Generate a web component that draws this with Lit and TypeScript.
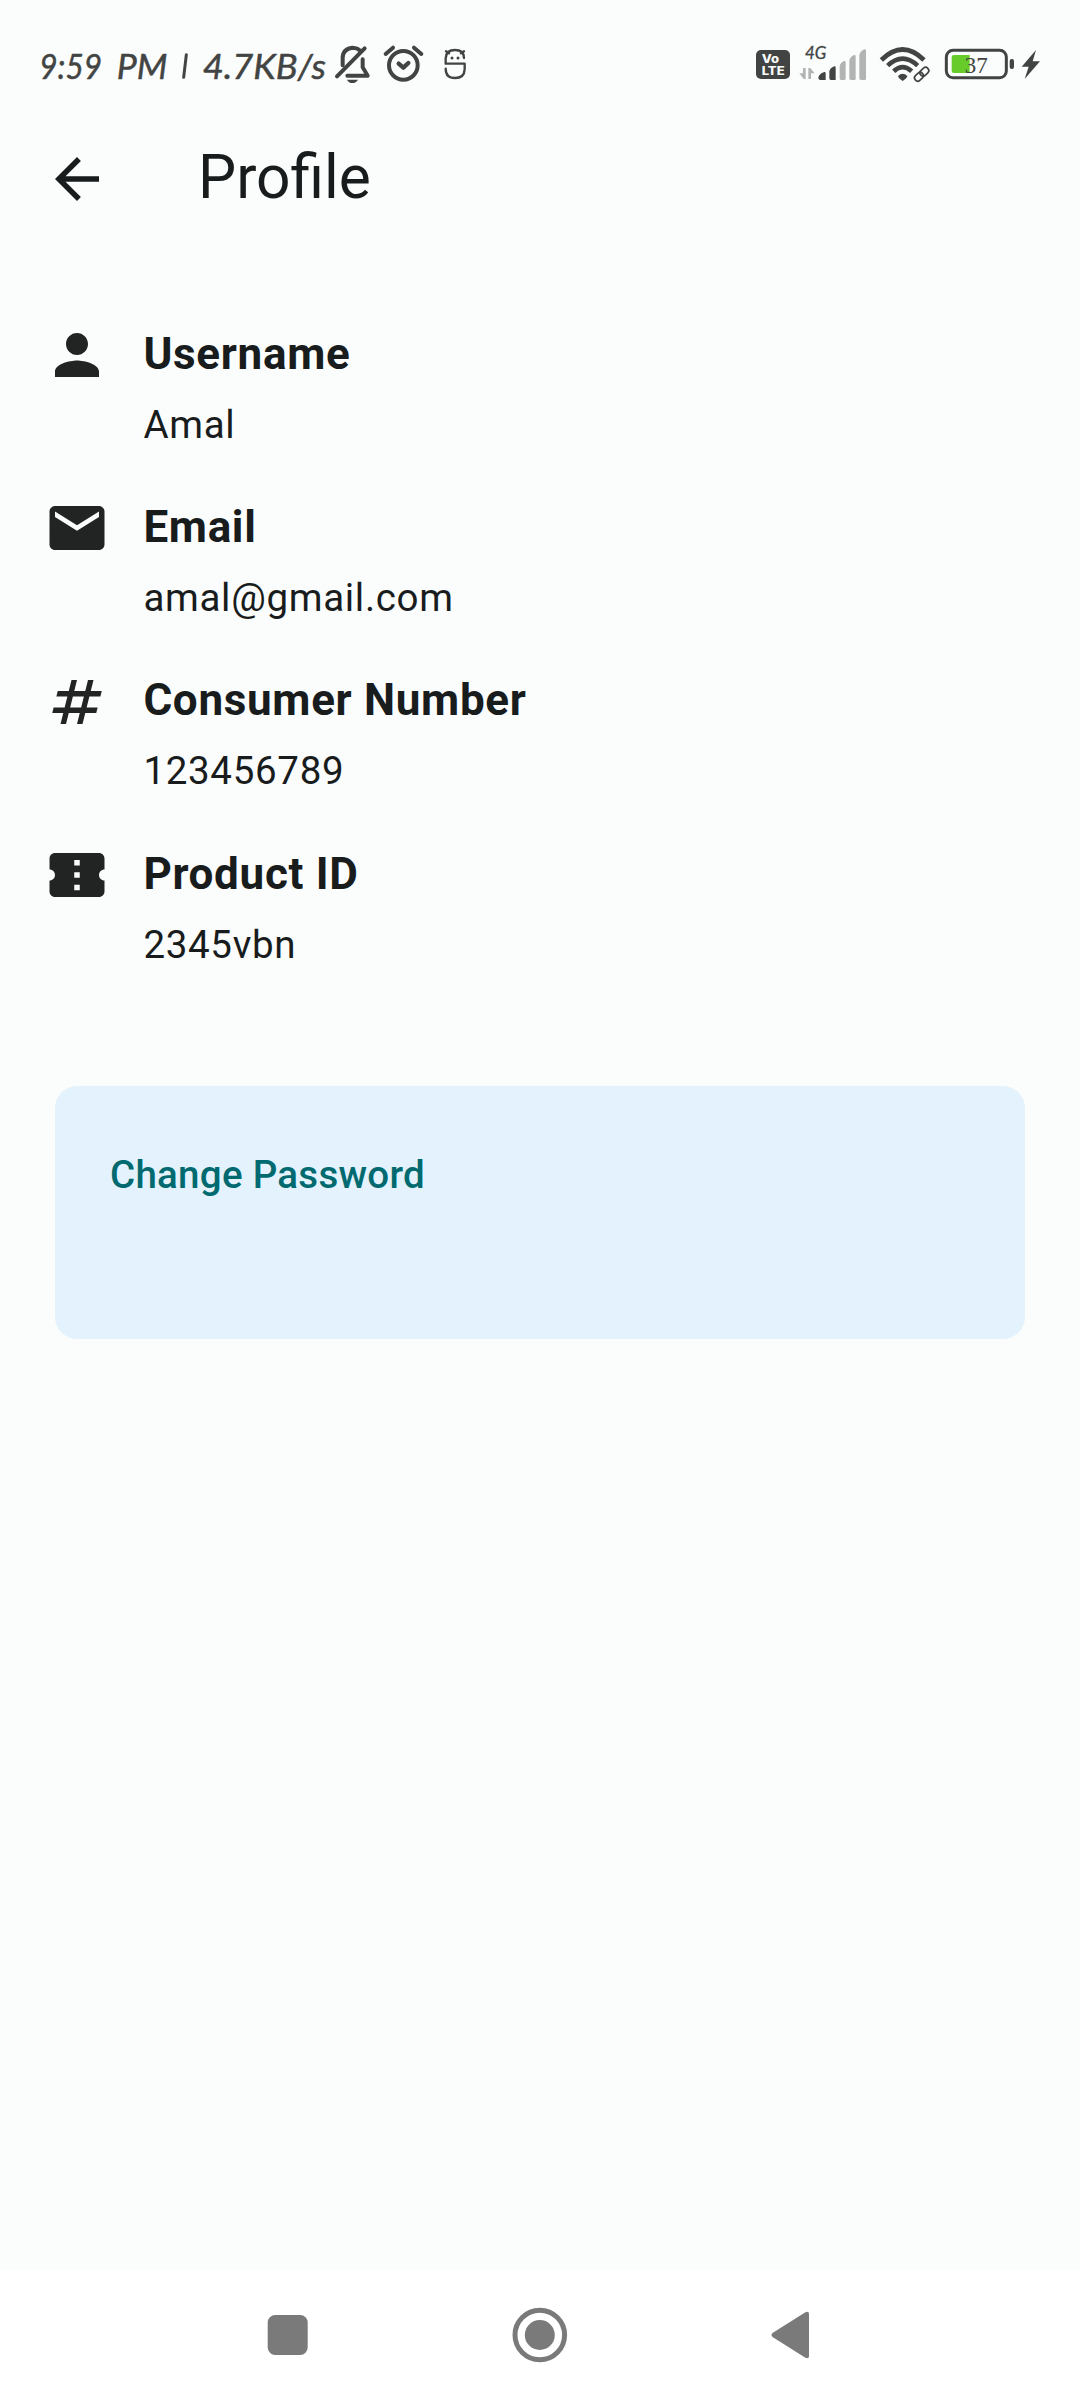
import { LitElement, html, css, svg } from "lit";
import { customElement } from "lit/decorators.js";

const ICONS = {
  back: svg`<path d="M20 11H7.83l5.59-5.59L12 4l-8 8 8 8 1.41-1.41L7.83 13H20v-2z"/>`,
  person: svg`<path d="M12 12c2.21 0 4-1.79 4-4s-1.79-4-4-4-4 1.79-4 4 1.79 4 4 4zm0 2c-2.67 0-8 1.34-8 4v2h16v-2c0-2.66-5.33-4-8-4z"/>`,
  mail: svg`<path d="M20 4H4c-1.1 0-1.99.9-1.99 2L2 18c0 1.1.9 2 2 2h16c1.1 0 2-.9 2-2V6c0-1.1-.9-2-2-2zm0 4l-8 5-8-5V6l8 5 8-5v2z"/>`,
  number: svg`<path d="M20.5 10L21 8h-4l1-4h-2l-1 4h-4l1-4h-2L9 8H5l-.5 2h4l-1 4h-4L3 16h4l-1 4h2l1-4h4l-1 4h2l1-4h4l.5-2h-4l1-4h4zm-7 4h-4l1-4h4l-1 4z"/>`,
  ticket: svg`<path d="M22 10V6c0-1.11-.9-2-2-2H4c-1.1 0-1.99.89-1.99 2v4c1.1 0 1.99.9 1.99 2s-.89 2-2 2v4c0 1.1.9 2 2 2h16c1.1 0 2-.9 2-2v-4c-1.1 0-2-.9-2-2s.9-2 2-2zm-9 7.5h-2v-2h2v2zm0-4.5h-2v-2h2v2zm0-4.5h-2v-2h2v2z"/>`,
};

const FIELDS = [
  { icon: ICONS.person, label: "Username", value: "Amal" },
  { icon: ICONS.mail, label: "Email", value: "amal@gmail.com" },
  { icon: ICONS.number, label: "Consumer Number", value: "123456789" },
  { icon: ICONS.ticket, label: "Product ID", value: "2345vbn" },
];

@customElement("status-bar")
class StatusBar extends LitElement {
  static styles = css`
    :host { display: flex; justify-content: space-between; height: 70px; padding: 30px 20px 0; }
    .group { display: flex; }
    svg { display: block; height: 70px; fill: #424443; }
    .line { fill: none; stroke: #424443; stroke-linecap: round; stroke-linejoin: round; }
    .pale { fill: #b2b4b3; }
    .clock { font: italic 400 105px "Lato", sans-serif; stroke: #424443; stroke-width: 1.5px; stroke-linejoin: round; }
    .net { font: italic 400 54px "Lato", sans-serif; stroke: #424443; stroke-width: 1px; }
    .badge { font: 800 34px "Inter", sans-serif; fill: #fbfdfc; }
    .level { font: 400 70px "Liberation Serif", serif; }
    .green { fill: #67cb2a; }
    .gap { stroke: #fbfdfc; fill: none; }
  `;
  render() {
    return html`
      <div class="group">
        <svg width="310" viewBox="0 0 930 210">
          <g class="clock">
            <text x="58" y="146" textLength="188" lengthAdjust="spacingAndGlyphs">9:59</text>
            <text x="290" y="146" textLength="152" lengthAdjust="spacingAndGlyphs">PM</text>
            <text x="548" y="146" textLength="370" lengthAdjust="spacingAndGlyphs">4.7KB/s</text>
          </g>
          <path class="line" stroke-width="9" d="M499 74L491 142"/>
        </svg>
        <svg width="160" viewBox="30 0 480 210">
          <g class="line" stroke-width="12">
            <path d="M68 106V84Q68 57 97 53Q115 54 122 64"/>
            <path d="M128 88V112L143 137H82"/>
            <path d="M51 139L134 55" stroke-width="12"/>
            <circle cx="250" cy="106" r="43"/>
            <path d="M236 101L250 113L265 99" stroke-width="13"/>
            <path d="M197 72L219 53M282 53L304 72" stroke-width="12"/>
          </g>
          <path d="M81 149H114Q108 159 97 159T81 149Z"/>
          <g class="line" stroke-width="7">
            <path d="M434 101H377V85Q378 60 405 60T432 84M377 116Q377 144 405 144T434 118V101"/>
            <path d="M378 64L387 70M432 64L423 70"/>
          </g>
          <circle cx="396" cy="84" r="4.5"/><circle cx="414" cy="84" r="4.5"/>
        </svg>
      </div>
      <div class="group">
        <svg width="130" viewBox="0 0 390 210">
          <rect x="48" y="60" width="102" height="87" rx="15"/>
          <text class="badge" x="65" y="99" textLength="52" lengthAdjust="spacingAndGlyphs">Vo</text>
          <text class="badge" x="65" y="136" textLength="69" lengthAdjust="spacingAndGlyphs">LTE</text>
          <text class="net" x="195" y="88" textLength="64" lengthAdjust="spacingAndGlyphs">4G</text>
          <path class="pale" d="M189 114H197V147H191L178 130H189ZM205 114H211L224 130H213V147H205Z"/>
          <path d="M235 143Q236 132 253 126Q257 125 257 130V150H240Q235 149 235 143ZM268 124Q270 114 283 109Q287 108 287 113V150H273Q268 150 268 145Z"/>
          <path class="pale" d="M299 108Q301 98 312 93Q317 92 317 97V146Q317 150 313 150H304Q299 150 299 145ZM328 92Q330 80 342 75Q347 74 347 79V146Q347 150 343 150H333Q328 150 328 145ZM358 75Q361 63 373 58Q378 57 378 62V146Q378 150 374 150H363Q358 150 358 145Z"/>
        </svg>
        <svg width="190" viewBox="0 0 570 210">
          <g fill="none" stroke="#424443" stroke-width="14">
            <path d="M34 90Q98 27 162 90"/>
            <path d="M53 107Q98 65 143 107"/>
            <path d="M71 124Q98 99 125 124"/>
          </g>
          <path d="M84 138Q98 124 112 138Q112 144 98 153Q84 144 84 138Z"/>
          <g transform="rotate(-43 155 132)">
            <g class="gap" stroke-width="12"><rect x="129" y="123" width="29" height="19" rx="9"/><rect x="151" y="123" width="29" height="19" rx="9"/></g>
            <g class="line" stroke-width="5"><rect x="129" y="123" width="29" height="19" rx="9"/><rect x="151" y="123" width="29" height="19" rx="9"/></g>
          </g>
          <rect class="line" x="229" y="61" width="180" height="82" rx="20" stroke-width="9"/>
          <rect x="419" y="87" width="13" height="30" rx="6"/>
          <path class="green" d="M252 75H299V129H252Q245 129 245 122V82Q245 75 252 75Z"/>
          <text class="level" x="284" y="128" textLength="69" lengthAdjust="spacingAndGlyphs">37</text>
          <path d="M498 60L455 110H476L464 147L510 94H488Z"/>
        </svg>
      </div>
    `;
  }
}

@customElement("profile-field")
class ProfileField extends LitElement {
  static properties = { icon: { attribute: false }, label: {}, value: {} };
  declare icon: unknown;
  declare label: string;
  declare value: string;
  static styles = css`
    :host { display: flex; gap: 33.4px; height: 173.25px; }
    svg { width: 66px; height: 66px; fill: #222423; flex: none; }
    .text { margin-top: -0.15px; }
    .label { font-size: 44px; line-height: 64px; font-weight: 700; letter-spacing: 0.6875px; }
    .value { font-size: 38.5px; line-height: 77.4px; letter-spacing: 0.6875px; }
  `;
  render() {
    return html`
      <svg viewBox="0 0 24 24">${this.icon}</svg>
      <div class="text">
        <div class="label">${this.label}</div>
        <div class="value">${this.value}</div>
      </div>
    `;
  }
}

@customElement("app-root")
class AppRoot extends LitElement {
  static styles = css`
    :host {
      display: flex; flex-direction: column; width: 1080px; height: 2400px; overflow: hidden;
      background: #fbfdfc; color: #191c1d; font-family: "Roboto", sans-serif;
    }
    .header { display: flex; gap: 88px; padding: 46px 44px 0; height: 66px; }
    .header svg { width: 66px; height: 66px; fill: #191c1d; }
    .title { margin: 0; font-size: 60.5px; font-weight: 400; line-height: 63px; }
    .fields { padding: 110px 44px 0; }
    .card {
      box-sizing: border-box; height: 253px; margin: 71px 55px 0; padding: 55px;
      border-radius: 22px; background: #e3f2fd;
    }
    .link {
      display: block; padding: 0; border: 0; background: none; color: #006a70;
      font: 500 38.5px/67.7px "Roboto", sans-serif; letter-spacing: 0.275px;
    }
    .nav {
      display: grid; grid-template-columns: repeat(3, 252px); justify-content: center;
      align-items: center; justify-items: center; height: 130.5px; margin-top: auto; background: #fff;
    }
    .nav svg { width: 60px; height: 60px; fill: #7a7a7a; }
  `;
  render() {
    return html`
      <status-bar></status-bar>
      <div class="header">
        <svg viewBox="0 0 24 24">${ICONS.back}</svg>
        <h1 class="title">Profile</h1>
      </div>
      <div class="fields">
        ${FIELDS.map((f) => html`<profile-field .icon=${f.icon} .label=${f.label} .value=${f.value}></profile-field>`)}
      </div>
      <div class="card"><button class="link">Change Password</button></div>
      <div class="nav">
        <svg viewBox="0 0 60 60"><rect x="9.7" y="10" width="40" height="40" rx="7.5"/></svg>
        <svg viewBox="0 0 60 60">
          <circle cx="29.8" cy="30" r="24.8" fill="none" stroke="#7a7a7a" stroke-width="5"/>
          <circle cx="29.8" cy="30" r="15"/>
        </svg>
        <svg viewBox="0 0 60 60"><path d="M10.5 28L43 7.5Q47 5.5 47 9V51Q47 54.5 43 52.5L10.5 32Q8.5 30 10.5 28Z"/></svg>
      </div>
    `;
  }
}
